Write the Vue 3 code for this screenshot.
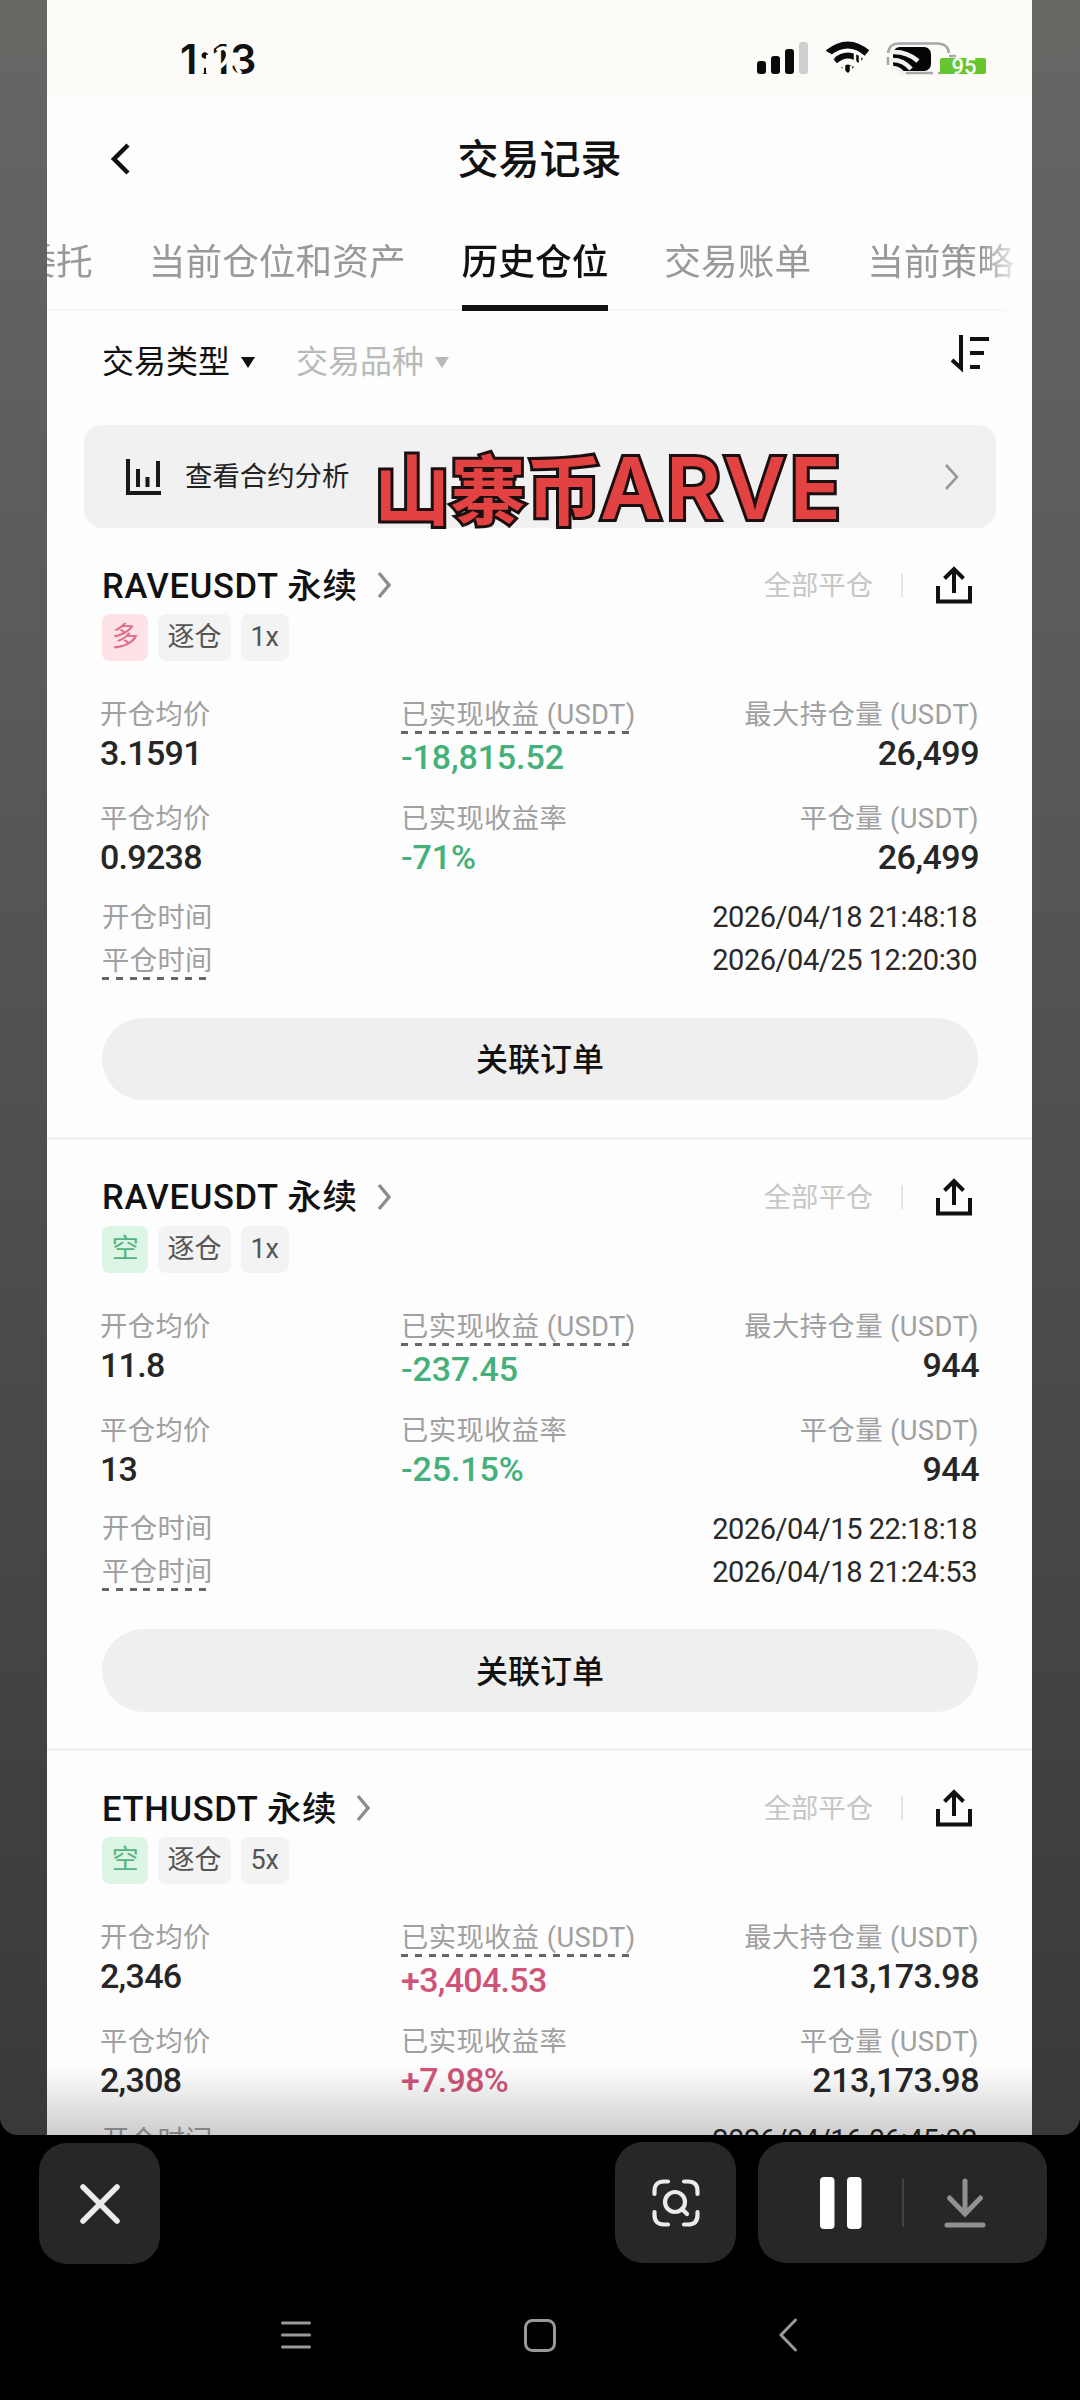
<template>
  <div class="screen">
    <div class="stage">
      <div class="sheet">
        <!-- BARRA DE ESTADO -->
        <div class="status-bar">
          <span class="clock">1:13</span>
          <svg class="glare" width="46" height="32" viewBox="0 0 46 32">
            <path d="M3 15 V30 M9 12 V30 M18 8 Q27 1 29 11 Q29 18 21 24 M37 22 Q39 28 42 31" stroke="#fcfbf8" stroke-width="4" fill="none" />
          </svg>
          <div class="status-icons">
            <svg class="signal" width="52" height="34" viewBox="0 0 52 34">
              <rect x="0" y="19" width="9" height="13" rx="3" fill="#0a0a0a" />
              <rect x="14" y="14" width="9" height="18" rx="3" fill="#0a0a0a" />
              <rect x="28" y="7" width="9" height="25" rx="3" fill="#0a0a0a" />
              <rect x="42" y="0" width="9" height="32" rx="3" fill="#cfcfcf" />
            </svg>
            <svg class="wifi" width="44" height="34" viewBox="0 0 44 34">
              <path d="M2 11 Q22 -5 41 11" stroke="#0a0a0a" stroke-width="7" fill="none" />
              <path d="M9 19 Q22 8 35 19" stroke="#0a0a0a" stroke-width="6" fill="none" />
              <path d="M15 25 Q22 20 28 25 L22 31 Z" fill="#0a0a0a" />
              <path d="M0 11 Q5 12 8 17 M18 32 V24 M25 32 V24 M16 25 L22 19 L26 23 M29 11 V21 M34 14 V22" stroke="#fcfbf8" stroke-width="2.500" fill="none" />
            </svg>
            <svg class="battery" width="104" height="36" viewBox="0 0 104 36">
              <path d="M1 11 Q2 1.500 12 1.500 H50 Q61 1.500 62 11 M1 15 V23 M19 31 H46 M51 31 H55 M62 14 H69" stroke="#a8a8a8" stroke-width="2.600" fill="none" />
              <rect x="6" y="5" width="38" height="24" rx="7" fill="#050505" />
              <path d="M4 10 Q20 9 31 19 M3 18 Q16 17 24 27 M3 26 Q12 25 17 33" stroke="#f1f1f1" stroke-width="4.500" fill="none" />
              <rect x="53" y="16" width="46" height="16" rx="2" fill="#67c52f" />
              <text x="64.500" y="32" class="battery-text">95</text>
            </svg>
          </div>
        </div>

        <!-- CABECERA -->
        <div class="header">
          <svg class="back" width="22" height="34" viewBox="0 0 22 34">
            <path d="M18 3 L4 17 L18 31" stroke="#111" stroke-width="4.500" fill="none" />
          </svg>
          <h1>交易记录</h1>
        </div>

        <div class="tabs">
          <div v-for="tab in tabs" :key="tab" class="tab" :class="{ active: tab === activeTab }">{{ tab }}</div>
        </div>

        <!-- FILTROS -->
        <div class="filters">
          <div class="filter">交易类型<i class="caret"></i></div>
          <div class="filter muted">交易品种<i class="caret"></i></div>
          <svg class="sort" width="40" height="38" viewBox="0 0 40 38">
            <path d="M2 25 L11 33 V0 M20 4 H39 M20 18 H34 M20 32 H30" stroke="#111" stroke-width="4" fill="none" />
          </svg>
        </div>

        <div class="banner">
          <svg width="36" height="36" viewBox="0 0 36 36">
            <path d="M2 0 V34 H35 M12 10 V28 M21.500 18 V28 M32 2 V28" stroke="#181818" stroke-width="4" fill="none" />
          </svg>
          <span>查看合约分析</span>
          <svg class="chevron" width="16" height="28" viewBox="0 0 16 28">
            <path d="M2 2 L13 14 L2 26" stroke="#999" stroke-width="2.600" fill="none" />
          </svg>
          <div class="caption"><span class="caption-cjk">山寨币</span><span class="caption-latin">ARVE</span></div>
        </div>

        <!-- POSICIONES -->
        <div v-for="(p, i) in positions" :key="i" class="card">
          <div class="card-title">
            <span class="symbol">{{ p.symbol }} 永续</span>
            <svg width="16" height="28" viewBox="0 0 16 28">
              <path d="M2 2 L12 14 L2 26" stroke="#8c8c8c" stroke-width="3.400" fill="none" />
            </svg>
            <span class="state">全部平仓</span>
            <i class="divider"></i>
            <svg class="share" width="38" height="38" viewBox="0 0 38 38">
              <path d="M3 20 V35.500 H35 V20 M19 27 V4 M9.500 12.500 L19 3 L28.500 12.500" stroke="#111" stroke-width="4" fill="none" />
            </svg>
          </div>
          <div class="tags">
            <span class="tag" :class="p.side === '多' ? 'long' : 'short'">{{ p.side }}</span>
            <span class="tag">逐仓</span>
            <span class="tag">{{ p.leverage }}</span>
          </div>
          <div class="stats">
            <div class="stat">
              <label>开仓均价</label>
              <strong>{{ p.open }}</strong>
            </div>
            <div class="stat hinted">
              <label class="dashed">已实现收益 (USDT)</label>
              <strong :class="pnlClass(p.pnl)">{{ p.pnl }}</strong>
            </div>
            <div class="stat right">
              <label>最大持仓量 (USDT)</label>
              <strong>{{ p.size }}</strong>
            </div>
            <div class="stat">
              <label>平仓均价</label>
              <strong>{{ p.close }}</strong>
            </div>
            <div class="stat">
              <label>已实现收益率</label>
              <strong :class="pnlClass(p.rate)">{{ p.rate }}</strong>
            </div>
            <div class="stat right">
              <label>平仓量 (USDT)</label>
              <strong>{{ p.size }}</strong>
            </div>
          </div>
          <div class="time-row">
            <label>开仓时间</label>
            <span>{{ p.openTime }}</span>
          </div>
          <div class="time-row">
            <label class="dashed">平仓时间</label>
            <span>{{ p.closeTime }}</span>
          </div>
          <button class="orders">关联订单</button>
        </div>
      </div>
      <div class="shade"></div>
    </div>

    <!-- CONTROLES -->
    <div class="controls">
      <button class="control close">
        <svg width="42" height="42" viewBox="0 0 42 42">
          <path d="M4 4 L38 38 M38 4 L4 38" stroke="#ebebeb" stroke-width="5.500" stroke-linecap="round" />
        </svg>
      </button>
      <button class="control scan">
        <svg width="50" height="50" viewBox="0 0 50 50" fill="none" stroke="#ebebeb" stroke-width="4.200" stroke-linecap="round">
          <path d="M3.500 16 V13 Q3.500 3.500 13 3.500 H17 M33 3.500 H37 Q46.500 3.500 46.500 13 V16 M46.500 34 V37 Q46.500 46.500 37 46.500 H33 M17 46.500 H13 Q3.500 46.500 3.500 37 V34" />
          <circle cx="24" cy="24" r="10" />
          <path d="M31 31 L36 36" />
        </svg>
      </button>
      <div class="control player">
        <svg width="42" height="52" viewBox="0 0 42 52">
          <rect x="0" y="0" width="14.500" height="52" rx="4" fill="#fff" />
          <rect x="27" y="0" width="14.500" height="52" rx="4" fill="#fff" />
        </svg>
        <i class="divider"></i>
        <svg width="42" height="50" viewBox="0 0 42 50" fill="none" stroke="#919191" stroke-width="5" stroke-linecap="round">
          <path d="M21 3 V35 M5.500 20 L21 36 L36.500 20 M3 47 H39" />
        </svg>
      </div>
    </div>

    <div class="nav-bar">
      <svg width="30" height="30" viewBox="0 0 30 30">
        <path d="M1.500 3 H28.500 M1.500 15 H28.500 M1.500 27 H28.500" stroke="#999" stroke-width="3" stroke-linecap="round" />
      </svg>
      <svg class="nav-home" width="32" height="33" viewBox="0 0 32 33">
        <rect x="1.500" y="1.500" width="29" height="30" rx="7" stroke="#999" stroke-width="3" fill="none" />
      </svg>
      <svg width="18" height="34" viewBox="0 0 18 34">
        <path d="M16.500 2 L2 17 L16.500 32" stroke="#999" stroke-width="3" fill="none" stroke-linecap="round" />
      </svg>
    </div>
  </div>
</template>

<script setup>
import { ref } from 'vue'

const tabs = ['当前委托', '当前仓位和资产', '历史仓位', '交易账单', '当前策略']
const activeTab = ref('历史仓位')

const positions = ref([
  {
    symbol: 'RAVEUSDT',
    side: '多',
    leverage: '1x',
    open: '3.1591',
    close: '0.9238',
    pnl: '-18,815.52',
    rate: '-71%',
    size: '26,499',
    openTime: '2026/04/18 21:48:18',
    closeTime: '2026/04/25 12:20:30'
  },
  {
    symbol: 'RAVEUSDT',
    side: '空',
    leverage: '1x',
    open: '11.8',
    close: '13',
    pnl: '-237.45',
    rate: '-25.15%',
    size: '944',
    openTime: '2026/04/15 22:18:18',
    closeTime: '2026/04/18 21:24:53'
  },
  {
    symbol: 'ETHUSDT',
    side: '空',
    leverage: '5x',
    open: '2,346',
    close: '2,308',
    pnl: '+3,404.53',
    rate: '+7.98%',
    size: '213,173.98',
    openTime: '2026/04/16 06:45:02',
    closeTime: ''
  }
])

function pnlClass(value) {
  return value.startsWith('-') ? 'loss' : 'gain'
}
</script>

<style>
body { margin: 0; background: #000; }
</style>

<style scoped>
.screen {
  width: 1080px;
  height: 2400px;
  overflow: hidden;
  background: #000;
  font-family: Roboto, "Noto Sans CJK SC", sans-serif;
  color: #111;
}
.stage {
  position: relative;
  height: 2135px;
  overflow: hidden;
  border-radius: 0 0 18px 18px;
  background: linear-gradient(#686764 0, #636363 180px, #5b5b5b 620px, #393939 2135px);
}
.sheet {
  width: 985px;
  height: 2135px;
  margin-left: 47px;
  background: #fdfdfd;
  overflow: hidden;
}
.shade {
  position: absolute;
  left: 47px;
  bottom: 0;
  width: 985px;
  height: 68px;
  background: linear-gradient(rgba(0,0,0,0), rgba(0,0,0,0.19));
}
svg { display: block; flex: none; overflow: visible; }
button { border: none; padding: 0; font-family: inherit; }

/* barra de estado */
.status-bar {
  position: relative;
  height: 98px;
  box-sizing: border-box;
  padding: 34px 41px 0 133px;
  display: flex;
  justify-content: space-between;
  background: linear-gradient(#fcfbf8 90px, #fdfdfd);
}
.clock {
  font: 600 41px/50px Inter, sans-serif;
  letter-spacing: 0.800px;
}
.glare {
  position: absolute;
  left: 152px;
  top: 43px;
}
.status-icons {
  display: flex;
  margin-top: 8px;
}
.wifi { margin-left: 17px; }
.battery { margin-left: 17px; }
.battery-text { font: 500 22px Roboto, sans-serif; fill: #fff; }

.header {
  height: 122px;
  padding-left: 63px;
  display: flex;
  align-items: center;
}
.header h1 {
  flex: 1;
  margin: 0 85px 6px 0;
  text-align: center;
  font-size: 41px;
  font-weight: 500;
}
.tabs {
  height: 91px;
  box-sizing: border-box;
  border-bottom: 2px solid #f4f4f4;
  display: flex;
  gap: 56px;
  white-space: nowrap;
  font-size: 36.700px;
  line-height: 85px;
  color: #999;
  -webkit-mask-image: linear-gradient(90deg, #000 935px, transparent 975px);
  mask-image: linear-gradient(90deg, #000 935px, transparent 975px);
}
.tab { flex: none; height: 91px; box-sizing: border-box; }
.tab:first-child { margin-left: -101px; }
.tab.active {
  color: #111;
  font-weight: 500;
  border-bottom: 6px solid #111;
}
.filters {
  height: 114px;
  box-sizing: border-box;
  padding: 24px 42px 0 55px;
  display: flex;
  align-items: flex-start;
  font-size: 32px;
  line-height: 54px;
}
.filter { display: flex; align-items: center; margin-right: 41px; }
.muted { color: #b9b9b9; }
.caret {
  margin-left: 11px;
  border: 7px solid transparent;
  border-top: 11px solid currentColor;
  border-bottom: 0;
}
.sort { margin-left: auto; }
.banner {
  position: relative;
  height: 103px;
  box-sizing: border-box;
  margin: 0 36px 0 37px;
  padding: 0 36px 0 42px;
  border-radius: 18px;
  background: #f1f1f1;
  display: flex;
  align-items: center;
  font-size: 27.400px;
  color: #222;
}
.banner > span { margin: 0 0 5px 23px; }
.banner .chevron { margin-left: auto; }
.caption {
  position: absolute;
  left: 290px;
  top: 14px;
  display: flex;
  align-items: baseline;
  white-space: nowrap;
  line-height: 100px;
  color: #e34243;
  -webkit-text-stroke: 6px #1c0f10;
  paint-order: stroke fill;
  stroke-linejoin: round;
  text-shadow: 1px 2px 1px #1c0f10;
}
.caption-cjk { font-size: 76px; font-weight: 700; }
.caption-latin {
  margin-left: -2px;
  font: 600 85px/100px Inter, sans-serif;
  letter-spacing: 4px;
}

/* tarjeta */
.card {
  height: 611.500px;
  box-sizing: border-box;
  padding: 29px 54px 0 55px;
  border-bottom: 3px solid #f0f0f0;
}
.card-title {
  height: 56px;
  display: flex;
  align-items: center;
}
.symbol {
  margin: 0 19px 5px 0;
  font-size: 34.500px;
  font-weight: 500;
  letter-spacing: 0.700px;
}
.state {
  margin: 0 0 4px auto;
  font-size: 27.300px;
  color: #c6c6c6;
}
.divider {
  width: 2px;
  height: 24px;
  margin-left: 28px;
  background: #e6e6e6;
}
.share { margin: 0 5px 0 32px; }
.tags {
  height: 47px;
  margin-top: 1px;
  display: flex;
  gap: 9.500px;
}
.tag {
  padding: 0 9.700px;
  border-radius: 8px;
  background: #f3f3f3;
  font-size: 27px;
  line-height: 46px;
  color: #555;
}
.tag.long { background: #fde3e8; color: #dc6f8b; }
.tag.short { background: #dcf5e4; color: #55b37f; }
.stats {
  display: grid;
  grid-template-columns: 301px 270px 1fr;
  grid-template-rows: 104px 95.500px;
  margin: 35px -1px 0 -2px;
  white-space: nowrap;
}
.stat { display: flex; flex-direction: column; align-items: flex-start; }
.stat.right { align-items: flex-end; }
.stat label, .time-row label {
  font-size: 27.300px;
  line-height: 38px;
  letter-spacing: 0.400px;
  color: #a0a0a0;
}
.stat strong {
  font-size: 34px;
  font-weight: 500;
  line-height: 39px;
  letter-spacing: -0.700px;
  color: #262626;
}
.stat.right strong { letter-spacing: -0.500px; }
.stat.hinted strong { margin-top: 4px; }
.stat strong.loss { color: #45b079; letter-spacing: -0.100px; }
.stat strong.gain { color: #cf5479; }
.dashed {
  background: repeating-linear-gradient(90deg, #666 0 7px, transparent 7px 13.800px) left bottom / calc(100% - 4px) 3px no-repeat;
}
.time-row {
  height: 43px;
  display: flex;
  align-items: center;
  justify-content: space-between;
}
.time-row label { padding-top: 1px; }
.time-row span {
  margin-right: 1px;
  font-size: 29px;
  letter-spacing: -0.450px;
  color: #2a2a2a;
}
.orders {
  display: block;
  width: 100%;
  height: 82.500px;
  margin-top: 36px;
  padding-bottom: 3px;
  border-radius: 42px;
  background: #efefef;
  font-size: 32px;
  font-weight: 500;
  color: #111;
}

/* controles inferiores */
.controls {
  display: flex;
  align-items: flex-start;
  padding: 7px 33px 0 39px;
}
.control {
  width: 121px;
  height: 121px;
  border-radius: 28px;
  background: #272727;
  display: flex;
  align-items: center;
  justify-content: center;
}
.control.close { margin-top: 1px; }
.scan { margin: 0 22px 0 auto; }
.player { width: 289px; }
.player .divider { height: 48px; margin: 0 40px; background: #434343; }
.nav-bar {
  height: 142px;
  margin: 0 283px 0 281px;
  display: flex;
  align-items: center;
  justify-content: space-between;
}
.nav-home { margin-right: 10px; }
</style>
